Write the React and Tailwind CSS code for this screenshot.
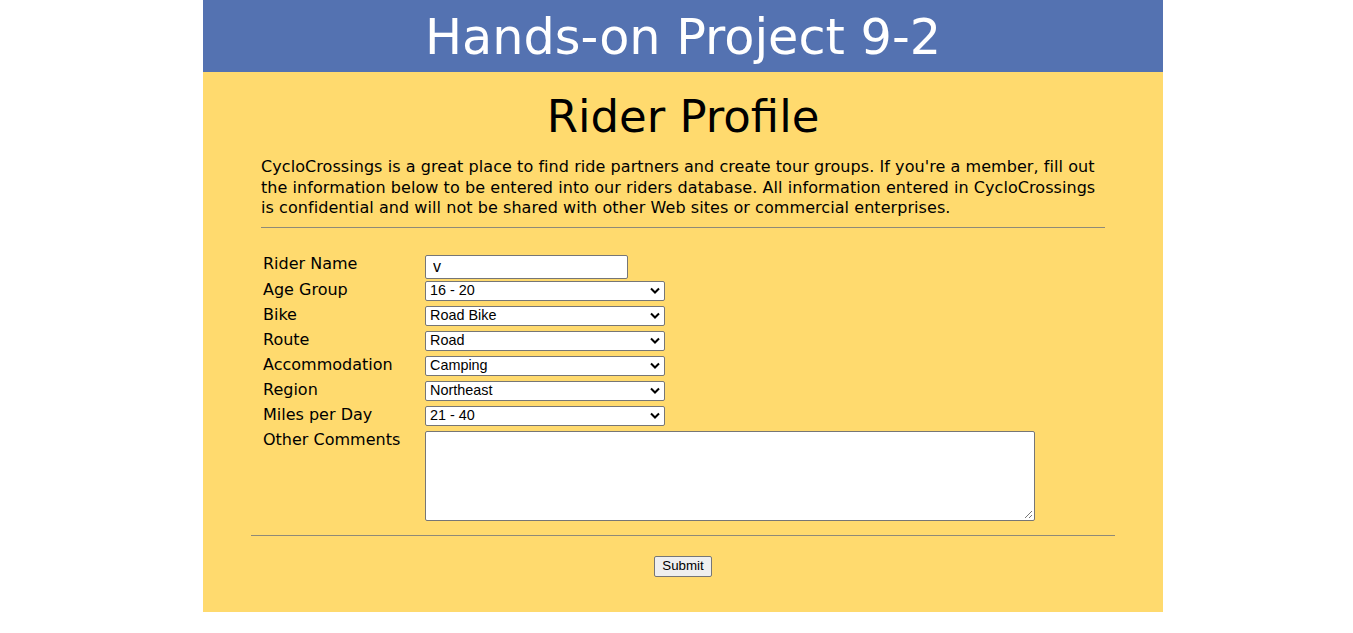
import React from "react";

const selects = [
  ["Age Group", "16 - 20"],
  ["Bike", "Road Bike"],
  ["Route", "Road"],
  ["Accommodation", "Camping"],
  ["Region", "Northeast"],
  ["Miles per Day", "21 - 40"],
];

const arial = { fontFamily: "Arial, 'Liberation Sans', sans-serif" };

export default function App() {
  return (
    <div className="w-full bg-white" style={{ fontFamily: "'DejaVu Sans', Verdana, sans-serif" }}>
      <div className="ml-[203px] w-[960px] bg-[#ffda6e]">
        <header className="h-[72px] bg-[#5472b1] flex items-center justify-center pt-[4px]">
          <h1 className="text-white text-[49.3px] leading-none">Hands-on Project 9-2</h1>
        </header>
        <div className="pb-[35px]">
          <h2 className="text-center text-black text-[45px] leading-none pt-[22px] pb-[18px]">Rider Profile</h2>
          <div className="mx-[58px]">
            <p className="text-[16px] leading-[20.5px] text-black tracking-[0.065px]">
              CycloCrossings is a great place to find ride partners and create tour groups. If you're a member, fill out the information below to be entered into our riders database. All information entered in CycloCrossings is confidential and will not be shared with other Web sites or commercial enterprises.
            </p>
            <div className="mt-[8px] h-px bg-[#8f8a78]" />
          </div>
          <div className="ml-[60px] mt-[27px] grid grid-cols-[162px_auto] gap-y-[5px] text-[16px] text-black">
            <div className="leading-[20px] -mt-[1px]">Rider Name</div>
            <div className="h-[21px]">
              <input defaultValue="v" className="w-[203px] h-[24px] -mt-[2px] border border-[#767676] rounded-[2px] bg-white px-[7px] text-[16px] leading-none" style={arial} />
            </div>
            {selects.map(([l, v]) => (
              <React.Fragment key={l}>
                <div className="leading-[20px] -mt-[1px]">{l}</div>
                <div className="h-[20px] w-[240px] border border-[#767676] rounded-[2px] bg-white flex items-center justify-between pl-[4px] pr-[4px] text-[14.4px]" style={arial}>
                  <span>{v}</span>
                  <svg width="10" height="7" viewBox="0 0 10 7"><path d="M1 1.5 L5 5.5 L9 1.5" fill="none" stroke="#000" strokeWidth="2" /></svg>
                </div>
              </React.Fragment>
            ))}
            <div className="leading-[20px] -mt-[1px]">Other Comments</div>
            <div className="relative w-[610px] h-[90px] border border-[#767676] rounded-[2px] bg-white">
              <svg className="absolute right-[1px] bottom-[1px]" width="10" height="10" viewBox="0 0 10 10"><path d="M9 2 L2 9 M9 6 L6 9" stroke="#777" strokeWidth="1" /></svg>
            </div>
          </div>
          <div className="mx-[48px] mt-[14px] h-px bg-[#8f8a78]" />
          <div className="flex justify-center mt-[20px]">
            <button className="h-[21px] px-[7px] border border-[#767676] rounded-[2px] bg-[#efefef] text-[13.33px] leading-none" style={arial}>Submit</button>
          </div>
        </div>
      </div>
    </div>
  );
}
